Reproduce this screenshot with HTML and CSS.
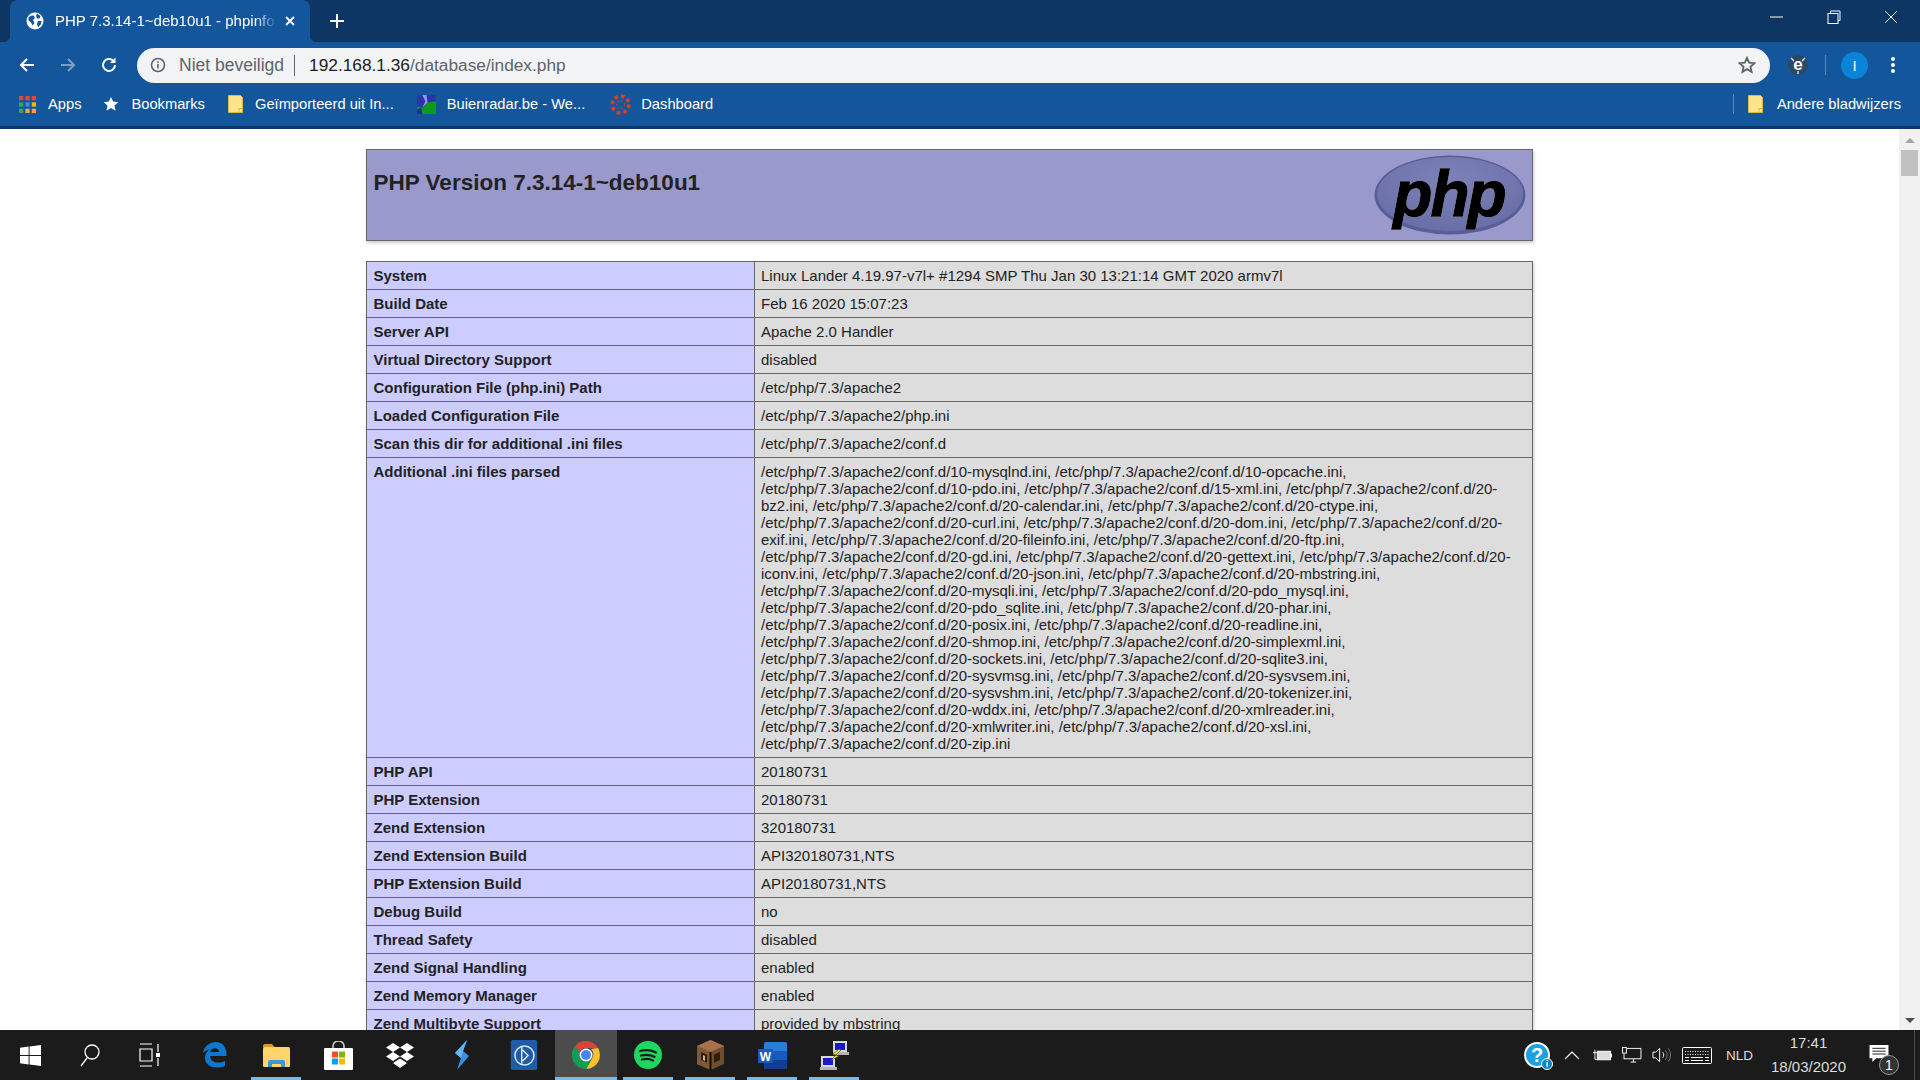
FILE: index.html
```html
<!DOCTYPE html>
<html lang="nl">
<head>
  <meta charset="UTF-8">
  <title>PHP 7.3.14-1~deb10u1 - phpinfo()</title>
  <link rel="stylesheet" href="styles.css">
</head>
<body>
  <div class="screen">

    <!-- browser chrome -->
    <div class="tabstrip">
      <div class="tab">
        <svg class="tab-icon" width="18" height="18" viewBox="0 0 18 18"><circle cx="9" cy="9" r="8.5" fill="#fff"/><path d="M2.500 5.500c2-1.500 4-2.500 5.500-1.500l1 2-2 2 1.500 3-2 2.500-1.500-3-2.500-2zM11 1.500l3.500 2.500-1 2.500-2.500 0-1-2.500zM12 9l3.500 0-.5 3-3 3.500-1-3.500z" fill="#14569b"/></svg>
        <span class="tab-title">PHP 7.3.14-1~deb10u1 - phpinfo</span>
        <svg class="tab-close" width="12" height="12" viewBox="0 0 12 12"><path d="M2 2l8 8M10 2l-8 8" stroke="#fff" stroke-width="1.800"/></svg>
      </div>
      <svg class="new-tab" width="16" height="16" viewBox="0 0 16 16"><path d="M8 1v14M1 8h14" stroke="#fff" stroke-width="2"/></svg>
      <div class="window-btns">
        <svg width="14" height="14" viewBox="0 0 14 14"><path d="M0 7h13" stroke="#fff"/></svg>
        <svg width="14" height="14" viewBox="0 0 14 14"><path d="M3.500 3V1h9.500v9.500h-2" fill="none" stroke="#fff"/><rect x="1" y="3.500" width="10" height="10" fill="none" stroke="#fff"/></svg>
        <svg width="14" height="14" viewBox="0 0 14 14"><path d="M1 1l12 12M13 1L1 13" stroke="#fff"/></svg>
      </div>
    </div>

    <div class="toolbar">
      <svg class="nav" width="18" height="18" viewBox="0 0 18 18"><path d="M16 9H3M9 3L3 9l6 6" fill="none" stroke="#fff" stroke-width="2"/></svg>
      <svg class="nav" width="18" height="18" viewBox="0 0 18 18"><path d="M2 9h13M9 3l6 6-6 6" fill="none" stroke="#7f9fc6" stroke-width="2"/></svg>
      <svg class="nav" width="18" height="18" viewBox="0 0 18 18"><path d="M15 9a6 6 0 1 1-2-4.500" fill="none" stroke="#fff" stroke-width="2"/><path d="M15.500 1.500v5.500h-5.500z" fill="#fff"/></svg>
      <div class="omnibox">
        <svg class="info" width="16" height="16" viewBox="0 0 16 16"><circle cx="8" cy="8" r="6.500" fill="none" stroke="#5f6368" stroke-width="1.600"/><path d="M8 7v4.500M8 4.300v1.500" stroke="#5f6368" stroke-width="1.600"/></svg>
        <span class="not-secure">Niet beveiligd</span>
        <span class="omni-sep"></span>
        <span class="url">192.168.1.36<span class="url-path">/database/index.php</span></span>
        <svg class="star" width="18" height="18" viewBox="0 0 20 20"><path d="M10 2l2.400 5.400 5.800.6-4.400 3.900 1.300 5.700L10 14.600l-5.100 3 1.300-5.700L1.800 8l5.800-.6z" fill="none" stroke="#5f6368" stroke-width="2"/></svg>
      </div>
      <svg class="ext" width="20" height="20" viewBox="0 0 20 20"><circle cx="10" cy="10" r="10" fill="#2c4a66"/><path d="M3 3l3 3M17 3l-3 3M10 16v3" stroke="#fff" stroke-width="1.200"/><text x="10" y="15" text-anchor="middle" class="ext-e">e</text></svg>
      <span class="tool-sep"></span>
      <span class="avatar">I</span>
      <svg class="menu" width="6" height="18" viewBox="0 0 6 18"><circle cx="3" cy="3" r="2" fill="#fff"/><circle cx="3" cy="9" r="2" fill="#fff"/><circle cx="3" cy="15" r="2" fill="#fff"/></svg>
    </div>

    <div class="bookmarks">
      <div class="bm bm-apps">
        <svg width="17" height="17" viewBox="0 0 16 16">
          <rect width="4" height="4" fill="#e8453c"/><rect x="6" width="4" height="4" fill="#e8453c"/><rect x="12" width="4" height="4" fill="#e8453c"/>
          <rect y="6" width="4" height="4" fill="#34a853"/><rect x="6" y="6" width="4" height="4" fill="#4285f4"/><rect x="12" y="6" width="4" height="4" fill="#fbbc05"/>
          <rect y="12" width="4" height="4" fill="#34a853"/><rect x="6" y="12" width="4" height="4" fill="#f4a63a"/><rect x="12" y="12" width="4" height="4" fill="#f4a63a"/>
        </svg>
        <span>Apps</span>
      </div>
      <div class="bm bm-star">
        <svg width="16" height="16" viewBox="0 0 18 18"><path d="M9 1l2.400 5.300 5.800.6-4.300 3.900 1.200 5.700L9 13.600l-5.100 2.900 1.200-5.700L.8 6.900l5.800-.6z" fill="#fff"/></svg>
        <span>Bookmarks</span>
      </div>
      <div class="bm bm-folder">
        <svg width="15" height="18" viewBox="0 0 15 18"><path class="folder" d="M.5.500h12l2 2v15H.5z"/><path class="folder-fold" d="M11 17.500v-4h3.500"/></svg>
        <span>Geïmporteerd uit In...</span>
      </div>
      <div class="bm bm-radar">
        <svg width="19" height="19" viewBox="0 0 18 18"><rect width="18" height="18" fill="#2a35a8"/><path d="M0 11l6 1 4-5 8-1v12H0z" fill="#0e9a1c"/><path d="M5 0l3 6-3 6 5-5-1-7z" fill="#8f9ce8"/><path d="M0 14l4-2 1 6H0z" fill="#1a2f9c"/></svg>
        <span>Buienradar.be - We...</span>
      </div>
      <div class="bm bm-dash">
        <svg width="21" height="21" viewBox="0 0 20 20"><circle cx="10" cy="10" r="8" fill="none" stroke="#e03a2f" stroke-width="3.500" stroke-dasharray="3.500 2.800"/><circle cx="10" cy="10" r="3.800" fill="none" stroke="#e03a2f" stroke-width="1.200" stroke-dasharray="1.500 2.100"/></svg>
        <span>Dashboard</span>
      </div>
      <div class="bm-right">
        <span class="bm-sep"></span>
        <svg width="15" height="18" viewBox="0 0 15 18"><path class="folder" d="M.5.500h12l2 2v15H.5z"/><path class="folder-fold" d="M11 17.500v-4h3.500"/></svg>
        <span>Andere bladwijzers</span>
      </div>
    </div>

    <!-- page -->
    <div class="viewport">
      <div class="page">
        <div class="center">
          <div class="php-head">
            <svg class="php-logo" width="152" height="80" viewBox="0 0 152 80">
              <defs>
                <radialGradient id="ovalFill" cx="50%" cy="30%" r="75%"><stop offset="0" stop-color="#7c81b8"/><stop offset="1" stop-color="#686da6"/></radialGradient>
              </defs>
              <ellipse cx="76" cy="40" rx="75.500" ry="39.500" fill="#595d97"/>
              <ellipse cx="76" cy="39" rx="73" ry="37" fill="url(#ovalFill)"/>
              <text x="75" y="61" text-anchor="middle" class="logo-text">php</text>
            </svg>
            <h1>PHP Version 7.3.14-1~deb10u1</h1>
          </div>

          <table class="info-table">
            <tr><td class="e">System</td><td class="v">Linux Lander 4.19.97-v7l+ #1294 SMP Thu Jan 30 13:21:14 GMT 2020 armv7l</td></tr>
            <tr><td class="e">Build Date</td><td class="v">Feb 16 2020 15:07:23</td></tr>
            <tr><td class="e">Server API</td><td class="v">Apache 2.0 Handler</td></tr>
            <tr><td class="e">Virtual Directory Support</td><td class="v">disabled</td></tr>
            <tr><td class="e">Configuration File (php.ini) Path</td><td class="v">/etc/php/7.3/apache2</td></tr>
            <tr><td class="e">Loaded Configuration File</td><td class="v">/etc/php/7.3/apache2/php.ini</td></tr>
            <tr><td class="e">Scan this dir for additional .ini files</td><td class="v">/etc/php/7.3/apache2/conf.d</td></tr>
            <tr><td class="e">Additional .ini files parsed</td><td class="v">/etc/php/7.3/apache2/conf.d/10-mysqlnd.ini, /etc/php/7.3/apache2/conf.d/10-opcache.ini, /etc/php/7.3/apache2/conf.d/10-pdo.ini, /etc/php/7.3/apache2/conf.d/15-xml.ini, /etc/php/7.3/apache2/conf.d/20-bz2.ini, /etc/php/7.3/apache2/conf.d/20-calendar.ini, /etc/php/7.3/apache2/conf.d/20-ctype.ini, /etc/php/7.3/apache2/conf.d/20-curl.ini, /etc/php/7.3/apache2/conf.d/20-dom.ini, /etc/php/7.3/apache2/conf.d/20-exif.ini, /etc/php/7.3/apache2/conf.d/20-fileinfo.ini, /etc/php/7.3/apache2/conf.d/20-ftp.ini, /etc/php/7.3/apache2/conf.d/20-gd.ini, /etc/php/7.3/apache2/conf.d/20-gettext.ini, /etc/php/7.3/apache2/conf.d/20-iconv.ini, /etc/php/7.3/apache2/conf.d/20-json.ini, /etc/php/7.3/apache2/conf.d/20-mbstring.ini, /etc/php/7.3/apache2/conf.d/20-mysqli.ini, /etc/php/7.3/apache2/conf.d/20-pdo_mysql.ini, /etc/php/7.3/apache2/conf.d/20-pdo_sqlite.ini, /etc/php/7.3/apache2/conf.d/20-phar.ini, /etc/php/7.3/apache2/conf.d/20-posix.ini, /etc/php/7.3/apache2/conf.d/20-readline.ini, /etc/php/7.3/apache2/conf.d/20-shmop.ini, /etc/php/7.3/apache2/conf.d/20-simplexml.ini, /etc/php/7.3/apache2/conf.d/20-sockets.ini, /etc/php/7.3/apache2/conf.d/20-sqlite3.ini, /etc/php/7.3/apache2/conf.d/20-sysvmsg.ini, /etc/php/7.3/apache2/conf.d/20-sysvsem.ini, /etc/php/7.3/apache2/conf.d/20-sysvshm.ini, /etc/php/7.3/apache2/conf.d/20-tokenizer.ini, /etc/php/7.3/apache2/conf.d/20-wddx.ini, /etc/php/7.3/apache2/conf.d/20-xmlreader.ini, /etc/php/7.3/apache2/conf.d/20-xmlwriter.ini, /etc/php/7.3/apache2/conf.d/20-xsl.ini, /etc/php/7.3/apache2/conf.d/20-zip.ini</td></tr>
            <tr><td class="e">PHP API</td><td class="v">20180731</td></tr>
            <tr><td class="e">PHP Extension</td><td class="v">20180731</td></tr>
            <tr><td class="e">Zend Extension</td><td class="v">320180731</td></tr>
            <tr><td class="e">Zend Extension Build</td><td class="v">API320180731,NTS</td></tr>
            <tr><td class="e">PHP Extension Build</td><td class="v">API20180731,NTS</td></tr>
            <tr><td class="e">Debug Build</td><td class="v">no</td></tr>
            <tr><td class="e">Thread Safety</td><td class="v">disabled</td></tr>
            <tr><td class="e">Zend Signal Handling</td><td class="v">enabled</td></tr>
            <tr><td class="e">Zend Memory Manager</td><td class="v">enabled</td></tr>
            <tr><td class="e">Zend Multibyte Support</td><td class="v">provided by mbstring</td></tr>
          </table>
        </div>
      </div>
      <div class="scrollbar">
        <span class="arrow-up"></span>
        <span class="thumb"></span>
        <span class="track"></span>
        <span class="arrow-down"></span>
      </div>
    </div>

    <!-- windows taskbar -->
    <div class="taskbar">
      <div class="tb-system">
        <div class="tb-sys"><svg width="21" height="21" viewBox="0 0 22 22"><path d="M0 3l9-1.300V10.500H0zM10 1.500L22 0v10.500H10zM0 11.500h9v8.800L0 19zM10 11.500h12V22l-12-1.700z" fill="#fff"/></svg></div>
        <div class="tb-sys"><svg width="22" height="24" viewBox="0 0 22 24"><circle cx="13" cy="9" r="7" fill="none" stroke="#fff" stroke-width="1.300"/><path d="M8 15l-6 8" stroke="#fff" stroke-width="1.300"/></svg></div>
        <div class="tb-sys"><svg width="22" height="24" viewBox="0 0 22 24"><path d="M1 1h12M1 23h12M1 6h12v12H1zM19 1v8M19 15v8" fill="none" stroke="#fff" stroke-width="1.200"/><path d="M17 10h4v4h-4z" fill="#fff"/></svg></div>
      </div>
      <div class="tb-apps">
        <div class="tb-item"><svg width="25" height="26" viewBox="0 0 25 26"><path fill-rule="evenodd" d="M1 11C2 4 8 0 14 0c7 0 11 6 10.500 14H8c0 6 8 8.500 15 5v5c-9 3.500-20 1-20-8.500 0-3.500 2-6.500 5-8.500C5 8 2.500 9.500 1 11zM8 10h9c0-5-8-5-9 0z" fill="#0c78d0"/></svg></div>
        <div class="tb-item tb-open"><svg width="27" height="23" viewBox="0 0 27 23"><path d="M0 2a2 2 0 0 1 2-2h7l3 3.500H0z" fill="#d99a1d"/><rect y="3" width="27" height="20" rx="1.500" fill="#fdd56b"/><path d="M5 23v-5a2 2 0 0 1 2-2h13a2 2 0 0 1 2 2v5h-4v-3H9v3z" fill="#3c97d9"/></svg></div>
        <div class="tb-item"><svg width="29" height="29" viewBox="0 0 29 29"><path d="M9 8V5a5.500 5 0 0 1 11 0v3" fill="none" stroke="#ccc" stroke-width="1.600"/><rect y="7" width="29" height="22" rx="1" fill="#fff"/><rect x="8" y="10.500" width="6" height="6" fill="#f25022"/><rect x="15" y="10.500" width="6" height="6" fill="#7fba00"/><rect x="8" y="17.500" width="6" height="6" fill="#00a4ef"/><rect x="15" y="17.500" width="6" height="6" fill="#ffb900"/></svg></div>
        <div class="tb-item"><svg width="30" height="25" viewBox="0 0 30 25" fill="#fff"><path d="M8 0l7 4.500-7 4.500-7-4.500zM22 0l7 4.500-7 4.500-7-4.500zM8 9l7 4.500-7 4.500-7-4.500zM22 9l7 4.500-7 4.500-7-4.500zM15 15.500l7 4.500-7 5-7-5z"/></svg></div>
        <div class="tb-item"><svg width="16" height="30" viewBox="0 0 16 30"><path d="M13 0L1 13l6 5-4 12 12-14-6-5z" fill="#3a8fe0"/><path d="M13 0L1 13l6 5 2-7z" fill="#62b4f5"/></svg></div>
        <div class="tb-item"><svg width="30" height="30" viewBox="0 0 29 33"><rect width="29" height="33" rx="2" fill="#1f5ba6"/><circle cx="15" cy="17" r="10.500" fill="none" stroke="#dbe8f6" stroke-width="1.600"/><path d="M12 8v18M13 11l6 6-6 6" fill="none" stroke="#dbe8f6" stroke-width="1.600"/></svg></div>
        <div class="tb-item tb-active tb-open"><svg width="28" height="28" viewBox="0 0 28 28"><path d="M14 0a14 14 0 0 1 12.100 7H14a7 7 0 0 0-6.600 4.700L3.200 5A14 14 0 0 1 14 0z" fill="#db4437"/><path d="M26.100 7A14 14 0 0 1 14 28l6-10.500A7 7 0 0 0 19 8z" fill="#fbc02d"/><path d="M3.200 5A14 14 0 0 0 14 28l6-10.500a7 7 0 0 1-12.600-5.800z" fill="#0f9d58"/><circle cx="14" cy="14" r="6.500" fill="#fff"/><circle cx="14" cy="14" r="5" fill="#4285f4"/></svg></div>
        <div class="tb-item tb-open"><svg width="28" height="28" viewBox="0 0 28 28"><circle cx="14" cy="14" r="14" fill="#1ed760"/><path d="M6 10c6-1.500 11-1 16 1.500M7 14.500c5-1.200 9-.8 13.500 1.300M8 18.500c4-.9 8-.6 11 1" fill="none" stroke="#1b1b1b" stroke-width="2.300" stroke-linecap="round"/></svg></div>
        <div class="tb-item tb-open"><svg width="27" height="30" viewBox="0 0 27 30"><path d="M13.500 0L27 6v18l-13.500 6L0 24V6z" fill="#6f4e2c"/><path d="M13.500 0L27 6l-13.500 6L0 6z" fill="#a8714e"/><path d="M0 6l13.500 6v18L0 24z" fill="#7d5a35"/><path d="M13.500 12v18" stroke="#140c05" stroke-width="2"/><path d="M4 12l6 2.700v8L4 20z" fill="#2e1d0e"/><path d="M6 15l2 1v5l-2-1z" fill="#c9b79c"/><path d="M17 14.700l6-2.700v8l-6 2.700z" fill="#2e1d0e"/></svg></div>
        <div class="tb-item tb-open"><svg width="29" height="27" viewBox="0 0 29 27"><rect x="6" width="23" height="27" rx="1.500" fill="#2b7cd3"/><path d="M6 9h23v9H6z" fill="#185abd"/><path d="M6 18h23v8a1 1 0 0 1-1 1H7a1 1 0 0 1-1-1z" fill="#103f91"/><rect y="7" width="15" height="14" rx="1" fill="#185abd"/><text x="7.500" y="18.500" text-anchor="middle" class="word-w">W</text></svg></div>
        <div class="tb-item tb-open"><svg width="29" height="29" viewBox="0 0 29 29"><rect x="13" y="0" width="14" height="11" fill="#d8d8d8"/><rect x="15" y="2" width="10" height="7" fill="#1a1ad0"/><path d="M13 11h16v3H13z" fill="#b5b5b5"/><rect x="1" y="15" width="14" height="11" fill="#d8d8d8"/><rect x="3" y="17" width="10" height="7" fill="#1a1ad0"/><path d="M0 26h17v3H0z" fill="#b5b5b5"/><path d="M19 8l-6 5 3 1-6 6 9-5-3-1 5-5z" fill="#ffe21a" stroke="#222" stroke-width=".5"/></svg></div>
      </div>
      <div class="tray">
        <span class="help-icon">?<span class="help-i">i</span></span>
        <svg class="tray-up" width="16" height="9" viewBox="0 0 16 9"><path d="M1 8l7-7 7 7" fill="none" stroke="#fff" stroke-width="1.100"/></svg>
        <svg class="tray-bat" width="19" height="13" viewBox="0 0 20 12"><path d="M0 3h4M2 0v6M2 6v4h2" fill="none" stroke="#fff"/><rect x="4.500" y="1.500" width="14" height="9" fill="#ddd" stroke="#fff"/><rect x="19" y="4" width="1" height="4" fill="#fff"/></svg>
        <svg class="tray-net" width="20" height="16" viewBox="0 0 21 17"><path d="M5 1.500h15v11H2M9 16h6M12 12.500V16M2 7v6" fill="none" stroke="#fff"/><rect x=".5" y=".5" width="4" height="6" fill="#1b1b1b" stroke="#fff"/></svg>
        <svg class="tray-vol" width="20" height="16" viewBox="0 0 21 16"><path d="M1 5h3l4-4v14l-4-4H1z" fill="none" stroke="#fff"/><path d="M11 5a4 4 0 0 1 0 6" fill="none" stroke="#fff"/><path d="M14 3a8 8 0 0 1 0 10M17 1a11 11 0 0 1 0 14" fill="none" stroke="#777"/></svg>
        <svg class="tray-kbd" width="30" height="17" viewBox="0 0 30 17"><rect x=".5" y=".5" width="29" height="16" rx="1" fill="none" stroke="#fff"/><path d="M3 4.500h24M3 7.500h24" stroke="#fff" stroke-dasharray="1 1.500"/><path d="M3 10.500h4M9 10.500h12M23 10.500h4M3 13.500h4M9 13.500h12M23 13.500h4" stroke="#fff"/></svg>
        <span class="lang">NLD</span>
        <div class="clock"><span>17:41</span><span>18/03/2020</span></div>
        <div class="notif">
          <svg width="20" height="18" viewBox="0 0 20 19"><path d="M0 0h20v14H7l-4 4v-4H0z" fill="#fff"/><path d="M3 3.500h14M3 6.500h14M3 9.500h14" stroke="#1b1b1b"/></svg>
          <span class="notif-count">1</span>
        </div>
        <span class="show-desktop"></span>
      </div>
    </div>

  </div>
</body>
</html>
```

FILE: styles.css
```css
* {
  box-sizing: border-box;
}
html, body {
  margin: 0;
  height: 100%;
  overflow: hidden;
}
body {
  font-family: "Liberation Sans", Arial, sans-serif;
  color: #222;
}
.screen {
  display: flex;
  flex-direction: column;
  height: 1080px;
}

/* tab strip */
.tabstrip {
  height: 42px;
  background: #0d3665;
  display: flex;
  align-items: flex-end;
  flex-shrink: 0;
}
.tab {
  position: relative;
  width: 300px;
  height: 42px;
  margin-left: 10px;
  padding: 0 14px 0 16px;
  background: #14569b;
  border-radius: 8px 8px 0 0;
  display: flex;
  align-items: center;
  color: #fff;
}
.tab::before, .tab::after {
  content: "";
  position: absolute;
  bottom: 0;
  width: 7px;
  height: 7px;
}
.tab::before {
  left: -7px;
  background: radial-gradient(circle at 0 0, transparent 7px, #14569b 7.500px);
}
.tab::after {
  right: -7px;
  background: radial-gradient(circle at 100% 0, transparent 7px, #14569b 7.500px);
}
.tab-icon {
  flex-shrink: 0;
  margin-right: 11px;
}
.tab-title {
  flex: 1;
  min-width: 0;
  white-space: nowrap;
  font-size: 15px;
  margin-top: -1px;
  -webkit-mask-image: linear-gradient(to right, #000 90%, transparent);
  mask-image: linear-gradient(to right, #000 90%, transparent);
}
.tab-close {
  flex-shrink: 0;
  margin-left: 7px;
}
.new-tab {
  align-self: center;
  margin-left: 19px;
}
.window-btns {
  margin-left: auto;
  align-self: center;
  display: flex;
  gap: 43px;
  padding-right: 22px;
  margin-top: -8px;
}

/* toolbar */
.toolbar {
  height: 42px;
  padding-top: 4px;
  background: #14569b;
  display: flex;
  align-items: center;
  flex-shrink: 0;
}
.nav {
  margin-left: 18px;
  margin-right: 4px;
  flex-shrink: 0;
}
.nav + .nav {
  margin-left: 19px;
}
.omnibox {
  margin-left: 15px;
  width: 1633px;
  height: 35px;
  background: #f1f3f4;
  border-radius: 18px;
  display: flex;
  align-items: center;
  padding: 0 14px 0 13px;
  font-size: 17.300px;
  color: #5f6368;
}
.info {
  margin-right: 13px;
}
.not-secure {
  font-size: 17.500px;
}
.omni-sep {
  width: 1px;
  height: 21px;
  background: #5f6368;
  margin: 0 14px 0 10px;
}
.url {
  color: #202124;
}
.url-path {
  color: #5f6368;
}
.star {
  margin-left: auto;
}
.ext {
  margin-left: 18px;
}
.ext-e {
  font-family: "Liberation Sans", sans-serif;
  font-weight: 700;
  font-size: 17px;
  fill: #fff;
}
.tool-sep {
  width: 1px;
  height: 20px;
  background: #5a86b8;
  margin: 0 15px 0 17px;
}
.avatar {
  width: 27px;
  height: 27px;
  border-radius: 50%;
  background: #0a84d6;
  color: #fff;
  font-size: 15px;
  display: flex;
  align-items: center;
  justify-content: center;
}
.menu {
  margin-left: 22px;
}

/* bookmarks bar */
.bookmarks {
  height: 45px;
  padding-bottom: 2px;
  background: #14569b;
  border-bottom: 3px solid #0d3665;
  display: flex;
  align-items: center;
  color: #fff;
  font-size: 14.700px;
  flex-shrink: 0;
}
.bm {
  display: flex;
  align-items: center;
  white-space: nowrap;
}
.bm-apps {
  margin-left: 19px;
  gap: 12px;
}
.bm-star {
  margin-left: 22px;
  gap: 12px;
}
.bm-folder {
  margin-left: 23px;
  gap: 12px;
}
.bm-radar {
  margin-left: 23px;
  gap: 11px;
}
.bm-dash {
  margin-left: 25px;
  gap: 10px;
}
.bm-right {
  margin-left: auto;
  display: flex;
  align-items: center;
  padding-right: 19px;
  gap: 14px;
}
.bm-sep {
  width: 1px;
  height: 20px;
  background: #5a86b8;
}
.folder {
  fill: #fde48a;
  stroke: #d9b74a;
}
.folder-fold {
  fill: none;
  stroke: #d9b74a;
}

/* page */
.viewport {
  flex: 1;
  min-height: 0;
  display: flex;
  background: #fff;
}
.page {
  flex: 1;
  min-width: 0;
  overflow: hidden;
  padding-top: 20px;
}
.center {
  width: 1167px;
  margin-left: 366px;
}
.php-head {
  height: 92px;
  background: #9999cc;
  border: 1px solid #666;
  box-shadow: 1px 2px 3px #ccc;
  padding: 20px 6px 0 6.500px;
  margin-bottom: 20px;
}
.php-logo {
  float: right;
  margin: -15px 0 0;
}
.logo-text {
  font-family: "Liberation Sans", sans-serif;
  font-weight: 700;
  font-style: italic;
  font-size: 64px;
  letter-spacing: -2px;
  fill: #000;
  stroke: #000;
  stroke-width: 1.300;
  filter: drop-shadow(0 0 .7px #fff);
}
.php-head h1 {
  margin: 0;
  font-size: 22.500px;
  line-height: 26px;
  font-weight: 700;
  color: #222;
}
.info-table {
  width: 1167px;
  table-layout: fixed;
  border-collapse: collapse;
  font-size: 15px;
  line-height: 17px;
  box-shadow: 1px 2px 3px #ccc;
}
.info-table td {
  border: 1px solid #666;
  padding: 5px 6px;
  vertical-align: top;
}
.info-table td.e {
  width: 388px;
  padding-left: 6.500px;
  background: #ccccff;
  font-weight: 700;
}
.v {
  background: #dddddd;
}

/* scrollbar */
.scrollbar {
  width: 21px;
  background: #f1f1f1;
  display: flex;
  flex-direction: column;
  align-items: center;
  flex-shrink: 0;
}
.arrow-up {
  width: 0;
  height: 0;
  margin: 9px 0 7px;
  border: 5px solid transparent;
  border-top: 0;
  border-bottom-color: #a3a3a3;
}
.thumb {
  width: 17px;
  height: 26px;
  background: #c1c1c1;
}
.track {
  flex: 1;
}
.arrow-down {
  width: 0;
  height: 0;
  margin-bottom: 7px;
  border: 5px solid transparent;
  border-bottom: 0;
  border-top-color: #505050;
}

/* taskbar */
.taskbar {
  height: 50px;
  background: #1b1b1b;
  display: flex;
  flex-shrink: 0;
}
.tb-system {
  display: flex;
  margin-right: 3px;
}
.tb-sys {
  width: 60px;
  display: flex;
  align-items: center;
  justify-content: center;
}
.tb-apps {
  display: flex;
}
.tb-item {
  width: 62px;
  display: flex;
  align-items: center;
  justify-content: center;
  position: relative;
}
.tb-active {
  background: #4c4c4c;
}
.tb-open::after {
  content: "";
  position: absolute;
  left: 6px;
  right: 6px;
  bottom: 0;
  height: 3px;
  background: #76b9ed;
}
.tb-active::after {
  left: 0;
  right: 0;
}
.word-w {
  font-family: "Liberation Sans", sans-serif;
  font-size: 12px;
  font-weight: 700;
  fill: #fff;
}
.tray {
  margin-left: auto;
  display: flex;
  align-items: center;
  color: #fff;
}
.help-icon {
  width: 26px;
  height: 26px;
  border-radius: 50%;
  border: 2px solid #fff;
  background: #1ba1e2;
  color: #fff;
  font-size: 20px;
  font-weight: 700;
  display: flex;
  align-items: center;
  justify-content: center;
  position: relative;
}
.help-i {
  position: absolute;
  right: -5px;
  bottom: -4px;
  width: 12px;
  height: 12px;
  border-radius: 50%;
  background: #1082c8;
  border: 1px solid #fff;
  font-size: 9px;
  line-height: 10px;
  text-align: center;
}
.tray-up {
  margin-left: 14px;
}
.tray-bat {
  margin-left: 13px;
}
.tray-net,
.tray-vol,
.tray-kbd {
  margin-left: 10px;
}
.lang {
  margin-left: 14px;
  width: 27px;
  font-size: 13.500px;
  color: #ddd;
}
.clock {
  margin-left: 18px;
  width: 75px;
  display: flex;
  flex-direction: column;
  align-items: center;
  font-size: 15px;
  line-height: 24px;
  color: #ddd;
}
.notif {
  margin: 0 15px 0 23px;
  position: relative;
  width: 30px;
  height: 30px;
  padding-top: 5px;
}
.notif-count {
  position: absolute;
  right: 0;
  bottom: -5px;
  width: 20px;
  height: 20px;
  border-radius: 50%;
  background: #333;
  border: 1px solid #999;
  font-size: 14px;
  line-height: 18px;
  text-align: center;
}
.show-desktop {
  width: 1px;
  align-self: stretch;
  margin-right: 5px;
  background: #4a4a4a;
}
```
